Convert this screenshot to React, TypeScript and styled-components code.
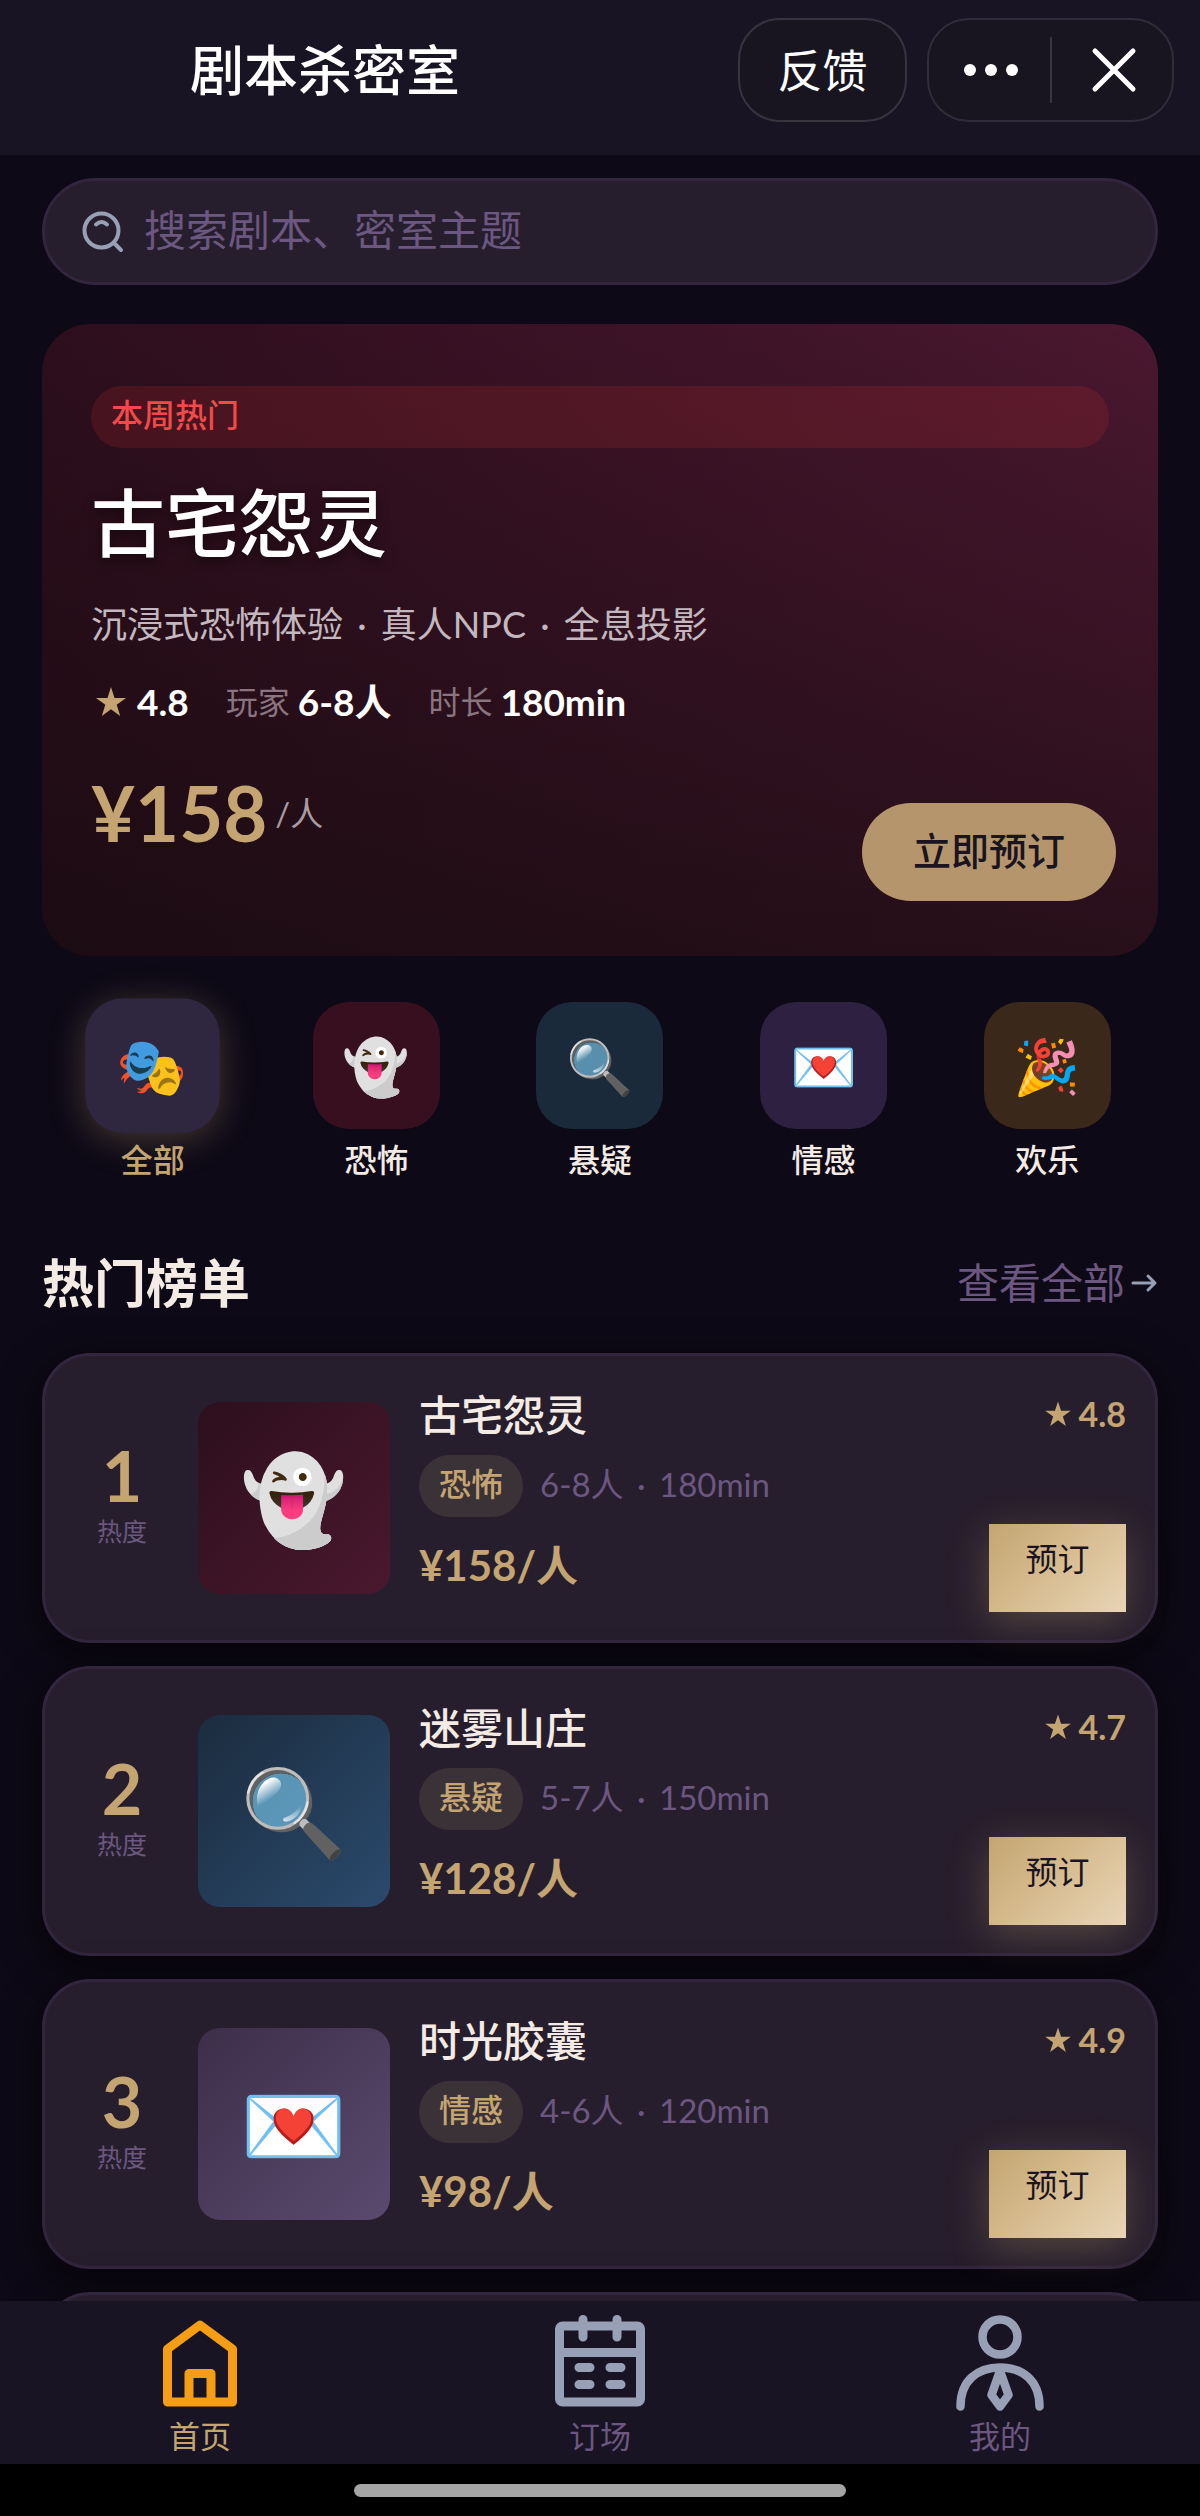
import React from "react";
import styled, { createGlobalStyle } from "styled-components";

const GlobalStyle = createGlobalStyle`
  *, *::before, *::after { box-sizing: border-box; }
  body {
    margin: 0;
    background: #0d0916;
    color: #f3ebe4;
    font-family: Lato, "Noto Sans CJK SC", "Noto Color Emoji", sans-serif;
  }
  h1, h2, h3, p { margin: 0; font-weight: inherit; }
  button { border: 0; padding: 0; font: inherit; color: inherit; cursor: pointer; }
  a { color: inherit; text-decoration: none; }
`;

const Screen = styled.div`
  display: flex;
  flex-direction: column;
  height: 100vh;
`;

const Header = styled.header`
  display: flex;
  flex: none;
  align-items: flex-start;
  gap: 20px;
  height: 155px;
  padding: 18px 26px 0 190px;
  background: #191423;
  color: #fff;
`;

const AppTitle = styled.h1`
  flex: 1;
  font-size: 54px;
  font-weight: 500;
  line-height: 106px;
`;

const Feedback = styled.button`
  width: 169px;
  height: 104px;
  padding-top: 2px;
  border: 2px solid #37333f;
  border-radius: 42px;
  background: #181521;
  font-size: 45px;
  line-height: 98px;
`;

const Capsule = styled.div`
  display: flex;
  align-items: center;
  width: 247px;
  height: 104px;
  border: 2px solid #302c39;
  border-radius: 42px;
  background: #181521;
`;

const CapsuleButton = styled.button`
  display: flex;
  flex: 1;
  align-items: center;
  justify-content: center;
  height: 66px;
  padding-left: 4px;
  background: none;
  & + & { border-left: 2px solid #383440; }
`;

const Main = styled.main`
  flex: 1;
  min-height: 0;
  overflow: hidden;
  padding: 23px 42px 0;
`;

const Search = styled.label`
  display: flex;
  align-items: center;
  gap: 20px;
  height: 107px;
  padding: 0 37px;
  border: 3px solid #32263f;
  border-radius: 54px;
  background: #271e2d;
`;

const SearchInput = styled.input`
  flex: 1;
  min-width: 0;
  padding: 0 0 4px;
  border: 0;
  outline: 0;
  background: none;
  color: #f3ebe4;
  font: inherit;
  font-size: 42px;
  line-height: 60px;
  &::placeholder { color: #6b5780; opacity: 1; }
`;

const Hero = styled.section`
  margin-top: 39px;
  padding: 62px 49px 55px;
  border-radius: 48px;
  background:
    linear-gradient(to top, rgba(13, 9, 10, 0.58), rgba(13, 9, 10, 0)),
    linear-gradient(96deg, #2d0e1c 0%, #4c1830 100%);
`;

const HeroTag = styled.div`
  height: 62px;
  padding: 0 20px;
  border-radius: 31px;
  background: rgba(229, 57, 53, 0.15);
  color: #f04a4a;
  font-size: 32px;
  font-weight: 500;
  line-height: 58px;
`;

const HeroTitle = styled.h2`
  margin-top: 30px;
  color: #fff;
  font-size: 74px;
  font-weight: 500;
  line-height: 90px;
  text-shadow: 0 4px 12px rgba(0, 0, 0, 0.5);
`;

const HeroText = styled.p`
  margin-top: 31px;
  color: #c3b8bf;
  font-size: 36px;
  line-height: 50px;
`;

const Dot = styled.span`
  margin: 0 5px;
`;

const Facts = styled.div`
  display: flex;
  gap: 37px;
  margin-top: 31px;
  color: #fff;
  font-size: 37px;
  font-weight: 700;
  line-height: 44px;
`;

const Fact = styled.div`
  display: flex;
  align-items: center;
  gap: 8px;
`;

const FactLabel = styled.span`
  color: #89757f;
  font-size: 32px;
  font-weight: 400;
`;

const HeroFooter = styled.div`
  display: flex;
  align-items: flex-end;
  justify-content: space-between;
  height: 134px;
  margin: 43px -7px 0 0;
`;

const HeroPrice = styled.p`
  display: flex;
  align-self: flex-start;
  align-items: center;
  gap: 8px;
  color: #c4a572;
  font-size: 76px;
  font-weight: 700;
  line-height: 92px;
`;

const Unit = styled.span`
  color: #a99ba2;
  font-size: 33px;
  font-weight: 400;
`;

const HeroButton = styled.button`
  width: 254px;
  height: 98px;
  padding-bottom: 4px;
  border-radius: 49px;
  background: #b5966c;
  color: #1a1420;
  font-size: 38px;
  font-weight: 500;
  line-height: 60px;
`;

const Categories = styled.nav`
  display: grid;
  grid-template-columns: repeat(5, 1fr);
  margin: 46px -1px 0;
`;

const Category = styled.button<{ $active?: boolean }>`
  display: flex;
  flex-direction: column;
  align-items: center;
  gap: 8px;
  background: none;
  color: ${(p) => (p.$active ? "#c4a572" : "#f3ebe4")};
  font-size: 32px;
  font-weight: 500;
  line-height: 46px;
`;

const CategoryTile = styled.span<{ $color: string; $active?: boolean }>`
  display: flex;
  align-items: center;
  justify-content: center;
  width: 127px;
  height: 127px;
  border-radius: 36px;
  background: ${(p) => p.$color};
  font-size: 54px;
  ${(p) => p.$active && "transform: scale(1.06); box-shadow: 0 6px 34px rgba(196, 165, 114, 0.3);"}
`;

const SectionHead = styled.div`
  display: flex;
  align-items: center;
  justify-content: space-between;
  margin-top: 65px;
  line-height: 70px;
`;

const SectionTitle = styled.h2`
  font-size: 52px;
  font-weight: 700;
`;

const MoreLink = styled.a`
  display: flex;
  align-items: center;
  gap: 5px;
  color: #6b5780;
  font-size: 42px;
`;

const List = styled.div`
  display: grid;
  gap: 23px;
  margin-top: 35px;
`;

const Card = styled.article`
  display: flex;
  height: 290px;
  padding: 29px 29px 28px 26px;
  border: 3px solid #32263f;
  border-radius: 48px;
  background: #271e2d;
  box-shadow: 0 10px 40px rgba(0, 0, 0, 0.55);
`;

const Rank = styled.div`
  display: flex;
  flex-direction: column;
  align-items: center;
  width: 102px;
  padding-top: 52px;
  color: #6b5780;
  font-size: 25px;
  line-height: 36px;
`;

const RankNumber = styled.span`
  color: #c4a572;
  font-size: 70px;
  font-weight: 700;
  line-height: 76px;
`;

const Cover = styled.div<{ $from: string; $to: string }>`
  display: flex;
  flex: none;
  align-items: center;
  justify-content: center;
  width: 192px;
  height: 192px;
  margin: 17px 29px 0 25px;
  border-radius: 22px;
  background: linear-gradient(135deg, ${(p) => p.$from}, ${(p) => p.$to});
  font-size: 86px;
`;

const Details = styled.div`
  flex: 1;
`;

const CardTitle = styled.h3`
  font-size: 42px;
  font-weight: 500;
  line-height: 60px;
`;

const Meta = styled.div`
  display: flex;
  gap: 17px;
  height: 62px;
  margin-top: 10px;
  color: #6b5780;
  font-size: 33px;
  line-height: 58px;
`;

const Badge = styled.span`
  padding: 0 20px;
  border-radius: 31px;
  background: #3b3238;
  color: #c4a572;
  font-size: 32px;
  font-weight: 500;
`;

const Price = styled.p`
  margin-top: 18px;
  color: #c4a572;
  font-size: 42px;
  font-weight: 700;
  line-height: 60px;
`;

const Side = styled.div`
  display: flex;
  flex-direction: column;
  align-items: flex-end;
  justify-content: space-between;
`;

const Rating = styled.div`
  display: flex;
  align-items: center;
  gap: 7px;
  color: #c4a572;
  font-size: 34px;
  font-weight: 700;
  line-height: 58px;
`;

const BookButton = styled.button`
  width: 137px;
  height: 88px;
  padding-bottom: 18px;
  background: linear-gradient(135deg, #c4a572 0%, #d4b88a 40%, #e8d5b7 100%);
  box-shadow: 0 10px 40px rgba(196, 165, 114, 0.3);
  color: #1a1420;
  font-size: 32px;
  line-height: 44px;
`;

const TabBar = styled.nav`
  display: grid;
  flex: none;
  grid-template-columns: repeat(3, 1fr);
  padding: 14px 0 8px;
  background: #191423;
`;

const Tab = styled.a<{ $active?: boolean }>`
  display: flex;
  flex-direction: column;
  align-items: center;
  gap: 5px;
  color: ${(p) => (p.$active ? "#c4a572" : "#6b5780")};
  font-size: 31px;
  line-height: 40px;
`;

const HomeArea = styled.div`
  display: flex;
  flex: none;
  justify-content: center;
  height: 52px;
  padding-top: 20px;
  background: #000;
`;

const HomeIndicator = styled.div`
  width: 41%;
  height: 13px;
  border-radius: 7px;
  background: #a5a5a5;
`;

const Star = ({ size }: { size: number }) => (
  <svg width={size} height={size} viewBox="0 0 24 24" fill="#c4a572" aria-hidden="true">
    <path d="M12 0.5 14.8 9H23.8L16.5 14.3 19.3 23 12 17.7 4.7 23 7.5 14.3 0.2 9H9.2Z" />
  </svg>
);

const FactStar = () => (
  <svg width="38" height="30" viewBox="0 0 38 30" fill="#c4a572" aria-hidden="true">
    <path d="M20 0 23.500 11H35L25.700 17.800 29.200 29 20 22.200 10.800 29 14.300 17.800 5 11H16.500Z" />
  </svg>
);

const HomeIcon = () => (
  <svg width="96" height="96" viewBox="0 0 96 96" fill="none" stroke="#f59e15" strokeWidth="9" strokeLinejoin="round" aria-hidden="true">
    <path d="M15.500 87V34L48 10 80.500 34V87Z" />
    <path d="M37 87V58.500H59V87" />
  </svg>
);

const CalendarIcon = () => (
  <svg width="96" height="96" viewBox="0 0 96 96" fill="none" stroke="#98a0b6" strokeWidth="9" strokeLinecap="round" aria-hidden="true">
    <rect x="7.500" y="11" width="81" height="76" rx="3" />
    <path d="M8 37.500H88M31 4.500V22M65 4.500V22M27 52.500H38M58 52.500H69M27 69.500H38M58 69.500H69" />
  </svg>
);

const PersonIcon = () => (
  <svg width="96" height="96" viewBox="0 0 96 96" fill="none" stroke="#98a0b6" strokeWidth="8.5" strokeLinecap="round" strokeLinejoin="round" aria-hidden="true">
    <circle cx="48" cy="22" r="17.500" />
    <path d="M8.500 91.500C8.500 66 25 52.500 48 52.500S87.500 66 87.500 91.500" />
    <path d="M48 56 39.500 80 48 91.500 56.500 80Z" />
  </svg>
);

const categories = [
  { label: "全部", emoji: "🎭", color: "#2f2640", active: true },
  { label: "恐怖", emoji: "👻", color: "#380f1e" },
  { label: "悬疑", emoji: "🔍", color: "#1a2a3a" },
  { label: "情感", emoji: "💌", color: "#2d2040" },
  { label: "欢乐", emoji: "🎉", color: "#3a281a" },
];

const scripts = [
  { title: "古宅怨灵", type: "恐怖", emoji: "👻", players: "6-8人", time: "180min", price: "¥158/人", score: "4.8", from: "#2d0f1c", to: "#4a182e" },
  { title: "迷雾山庄", type: "悬疑", emoji: "🔍", players: "5-7人", time: "150min", price: "¥128/人", score: "4.7", from: "#1b2c3e", to: "#2b4a6d" },
  { title: "时光胶囊", type: "情感", emoji: "💌", players: "4-6人", time: "120min", price: "¥98/人", score: "4.9", from: "#3d2e4a", to: "#5a4a6e" },
];

export default function App() {
  return (
    <>
      <GlobalStyle />
      <Screen>
        <Header>
          <AppTitle>剧本杀密室</AppTitle>
          <Feedback>反馈</Feedback>
          <Capsule>
            <CapsuleButton aria-label="更多">
              <svg width="54" height="14" viewBox="0 0 54 14" fill="#fff" aria-hidden="true">
                <circle cx="6" cy="7" r="6" />
                <circle cx="27" cy="7" r="6" />
                <circle cx="48" cy="7" r="6" />
              </svg>
            </CapsuleButton>
            <CapsuleButton aria-label="关闭">
              <svg width="46" height="46" viewBox="0 0 46 46" stroke="#fff" strokeWidth="5" strokeLinecap="round" aria-hidden="true">
                <path d="M4 4 42 42M42 4 4 42" />
              </svg>
            </CapsuleButton>
          </Capsule>
        </Header>
        <Main>
          <Search>
            <svg width="42" height="42" viewBox="0 0 42 42" fill="none" stroke="#98a0b6" strokeWidth="4" strokeLinecap="round" aria-hidden="true">
              <circle cx="19.500" cy="19.500" r="17" />
              <path d="M32 32 39 39M14 13.500Q19.500 8.500 25 13.500" />
            </svg>
            <SearchInput aria-label="搜索" placeholder="搜索剧本、密室主题" />
          </Search>
          <Hero>
            <HeroTag>本周热门</HeroTag>
            <HeroTitle>古宅怨灵</HeroTitle>
            <HeroText>
              沉浸式恐怖体验 <Dot>·</Dot> 真人NPC <Dot>·</Dot> 全息投影
            </HeroText>
            <Facts>
              <Fact><FactStar />4.8</Fact>
              <Fact><FactLabel>玩家</FactLabel>6-8人</Fact>
              <Fact><FactLabel>时长</FactLabel>180min</Fact>
            </Facts>
            <HeroFooter>
              <HeroPrice>¥158<Unit>/人</Unit></HeroPrice>
              <HeroButton>立即预订</HeroButton>
            </HeroFooter>
          </Hero>
          <Categories>
            {categories.map((c) => (
              <Category key={c.label} $active={c.active}>
                <CategoryTile $color={c.color} $active={c.active}>{c.emoji}</CategoryTile>
                {c.label}
              </Category>
            ))}
          </Categories>
          <SectionHead>
            <SectionTitle>热门榜单</SectionTitle>
            <MoreLink href="#all">
              查看全部
              <svg width="28" height="20" viewBox="0 0 28 20" fill="none" stroke="#98a0b6" strokeWidth="3" strokeLinecap="round" strokeLinejoin="round" aria-hidden="true">
                <path d="M3 10H25M18 3 25 10 18 17" />
              </svg>
            </MoreLink>
          </SectionHead>
          <List>
            {scripts.map((s, i) => (
              <Card key={s.title}>
                <Rank><RankNumber>{i + 1}</RankNumber>热度</Rank>
                <Cover $from={s.from} $to={s.to}>{s.emoji}</Cover>
                <Details>
                  <CardTitle>{s.title}</CardTitle>
                  <Meta>
                    <Badge>{s.type}</Badge>
                    <span>{s.players} <Dot>·</Dot> {s.time}</span>
                  </Meta>
                  <Price>{s.price}</Price>
                </Details>
                <Side>
                  <Rating><Star size={26} />{s.score}</Rating>
                  <BookButton>预订</BookButton>
                </Side>
              </Card>
            ))}
            <Card />
          </List>
        </Main>
        <TabBar>
          <Tab href="#home" $active><HomeIcon />首页</Tab>
          <Tab href="#booking"><CalendarIcon />订场</Tab>
          <Tab href="#me"><PersonIcon />我的</Tab>
        </TabBar>
        <HomeArea><HomeIndicator /></HomeArea>
      </Screen>
    </>
  );
}
